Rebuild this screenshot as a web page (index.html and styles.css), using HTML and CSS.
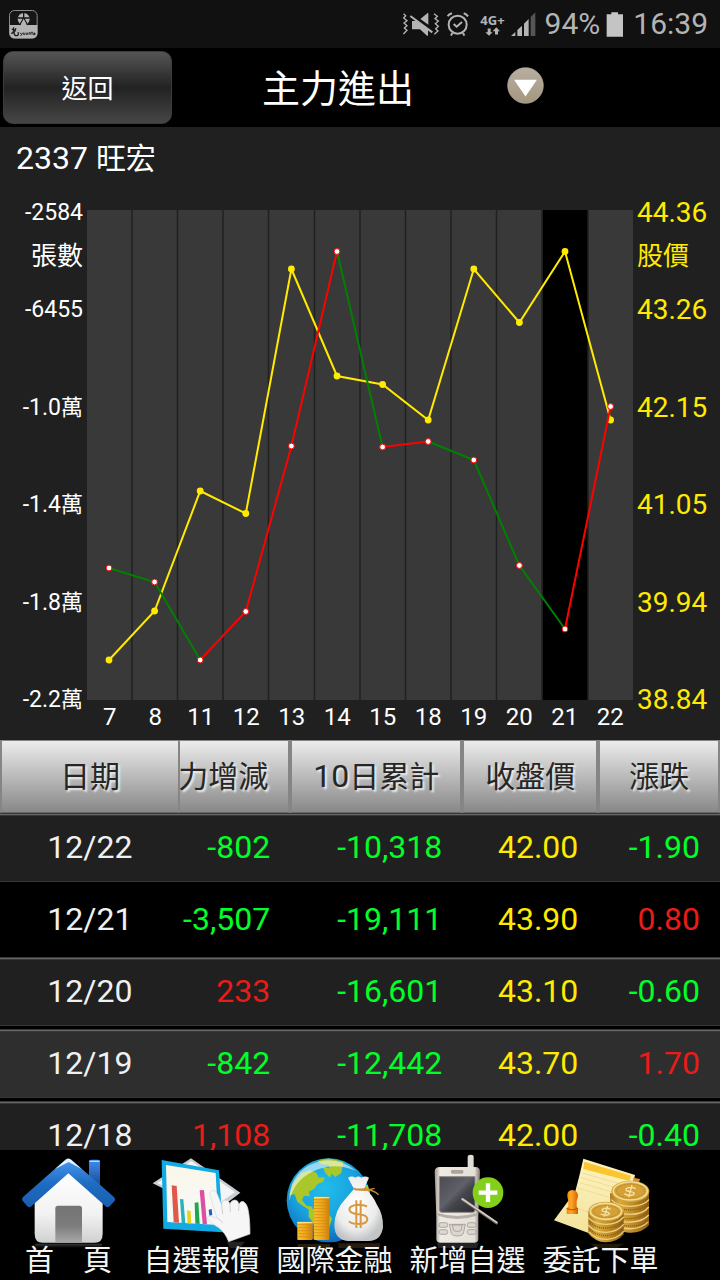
FILE: index.html
```html
<!DOCTYPE html>
<html lang="zh-Hant">
<head>
<meta charset="utf-8">
<meta name="viewport" content="width=device-width, initial-scale=1">
<title>主力進出</title>
<link rel="stylesheet" href="styles.css">
</head>
<body>
<div class="screen">
  <div class="status">
    <svg class="status-app" viewBox="27 27 87 87" aria-hidden="true">
      <rect x="28.500" y="28.500" width="83" height="83" rx="15" fill="#161616" stroke="#8c8c8c" stroke-width="3"/>
      <path d="M29 72H112V97Q112 112 97 112H44Q29 112 29 97Z" fill="#b4b4b4"/>
      <circle cx="71" cy="54" r="18" fill="#b4b4b4"/>
      <path d="M71 35V51M53 51H89M71 51L59 72M71 51L83 72" stroke="#161616" stroke-width="4" fill="none"/>
      <path d="M62 72L71 54L80 72Z" fill="#b4b4b4"/>
      <path d="M35 84L48 90M41 79L40 94L34 98M48 82L42 92Q42 104 50 104Q57 103 54 94" stroke="#1a1a1a" stroke-width="4" fill="none"/>
      <path d="M60 95L64 100M68 95L62 105M70 95V100H75V95M79 96H83V100H78V98M87 101V95H91V101M96 92V101M94 95H98M101 96H105V101H100V98H105" stroke="#1a1a1a" stroke-width="2.500" fill="none"/>
    </svg>
    <svg class="status-mute" viewBox="120 30 120 81" aria-hidden="true">
      <g fill="none" stroke="#b4b4b4" stroke-width="4">
        <path d="M128 38L134 44L128 51L138 59L129 66L138 74L130 81L138 88L127 99"/>
        <path d="M219 38L229 46L222 53L232 60L223 68L232 76L224 83L231 90L220 100"/>
      </g>
      <path d="M153 60H168L201 83V104H198L177 85H153ZM178 54L200 36H202V71Z" fill="#b4b4b4"/>
      <path d="M148 45L214 94" stroke="#b4b4b4" stroke-width="6"/>
    </svg>
    <svg class="status-alarm" viewBox="255 30 72 81" aria-hidden="true">
      <g fill="none" stroke="#b4b4b4">
        <circle cx="290" cy="71" r="27" stroke-width="6"/>
        <path d="M278 69L287 77L303 63" stroke-width="6"/>
        <path d="M260 46Q264 39 273 37M308 37Q316 39 321 46M274 96L270 104M306 96L310 104" stroke-width="6"/>
      </g>
    </svg>
    <div class="status-net">
      <span>4G+</span>
      <svg viewBox="374 80 45 26" aria-hidden="true"><path d="M382 84H391V95H397L386 106L375 95H382ZM404 102H413V92H419L408 80L397 92H404Z" fill="#b4b4b4"/></svg>
    </div>
    <svg class="status-signal" viewBox="450 30 78 81" aria-hidden="true">
      <path d="M453 105L466 93V105ZM472 87L486 74V105H472ZM492 68L506 54V105H492Z" fill="#b4b4b4"/>
      <path d="M512 48L526 34V105H512Z" fill="#555"/>
    </svg>
    <span class="status-text">94%</span>
    <svg class="status-battery" viewBox="738 30 54 81" aria-hidden="true"><path d="M740 40H754V34H774V40H789V107H740Z" fill="#c4c4c4"/></svg>
    <time class="status-text">16:39</time>
  </div>

  <header class="topbar">
    <button class="back" type="button">返回</button>
    <h1 class="title">主力進出</h1>
    <button class="picker" type="button" aria-label="選擇功能">
      <svg viewBox="0 0 110 110" aria-hidden="true">
        <defs><linearGradient id="sand" x1="0" y1="0" x2="0" y2="1"><stop offset="0" stop-color="#b8aea0"/><stop offset="1" stop-color="#a4977f"/></linearGradient></defs>
        <circle cx="55" cy="55" r="53" fill="url(#sand)" stroke="#b9af9f" stroke-width="2"/>
        <path d="M21 38H89L55 88Z" fill="#fff"/>
      </svg>
    </button>
  </header>

  <main class="main">
    <h2 class="stock">2337 <span class="cjk">旺宏</span></h2>

    <section class="chart">
      <div class="axis axis-left">
        <span>-2584</span><span class="unit">張數</span><span>-6455</span>
        <span>-1.0<span class="wan">萬</span></span><span>-1.4<span class="wan">萬</span></span><span>-1.8<span class="wan">萬</span></span><span>-2.2<span class="wan">萬</span></span>
      </div>
      <div class="plot">
        <svg class="plot-area" viewBox="87 210 546 490" role="img" aria-label="主力張數與股價走勢">
          <rect x="87" y="210" width="546" height="490" fill="#393939"/>
          <rect x="542.500" y="210" width="45.500" height="490" fill="#000"/>
          <path d="M132 210V700M177.500 210V700M223 210V700M268.500 210V700M314.500 210V700M360 210V700M405.500 210V700M451 210V700M496.500 210V700M542 210V700M588 210V700" stroke="#202020" stroke-width="1.500"/>
          <g fill="none" stroke-width="2">
            <path stroke="#ffea00" d="M109 660L154.600 611L200.200 491L245.800 513.500L291.400 269L337 376L382.600 384.500L428.200 420L473.800 269L519.400 322.500L565 251.500L610.600 420"/>
          </g>
          <g fill="#ffea00">
            <circle cx="109" cy="660" r="3.400"/><circle cx="154.600" cy="611" r="3.400"/><circle cx="200.200" cy="491" r="3.400"/><circle cx="245.800" cy="513.500" r="3.400"/><circle cx="291.400" cy="269" r="3.400"/><circle cx="337" cy="376" r="3.400"/><circle cx="382.600" cy="384.500" r="3.400"/><circle cx="428.200" cy="420" r="3.400"/><circle cx="473.800" cy="269" r="3.400"/><circle cx="519.400" cy="322.500" r="3.400"/><circle cx="565" cy="251.500" r="3.400"/><circle cx="610.600" cy="420" r="3.400"/>
          </g>
          <g fill="none" stroke-width="2">
            <path stroke="#008000" d="M109 568L154.600 582L200.200 660M337 251.500L382.600 447M428.200 441.500L473.800 460L519.400 565.500L565 629"/>
            <path stroke="#f00" d="M200.200 660L245.800 611.500L291.400 446L337 251.500M382.600 447L428.200 441.500M565 629L610.600 406.500"/>
          </g>
          <g fill="#fff" stroke="#f00" stroke-width="1">
            <circle cx="109" cy="568" r="2.900"/><circle cx="154.600" cy="582" r="2.900"/><circle cx="200.200" cy="660" r="2.900"/><circle cx="245.800" cy="611.500" r="2.900"/><circle cx="291.400" cy="446" r="2.900"/><circle cx="337" cy="251.500" r="2.900"/><circle cx="382.600" cy="447" r="2.900"/><circle cx="428.200" cy="441.500" r="2.900"/><circle cx="473.800" cy="460" r="2.900"/><circle cx="519.400" cy="565.500" r="2.900"/><circle cx="565" cy="629" r="2.900"/><circle cx="610.600" cy="406.500" r="2.900"/>
          </g>
        </svg>
        <div class="days">
          <span>7</span><span>8</span><span>11</span><span>12</span><span>13</span><span>14</span><span>15</span><span>18</span><span>19</span><span>20</span><span>21</span><span>22</span>
        </div>
      </div>
      <div class="axis axis-right">
        <span>44.36</span><span class="unit">股價</span><span>43.26</span><span>42.15</span><span>41.05</span><span>39.94</span><span>38.84</span>
      </div>
    </section>

    <div class="table-wrap">
      <table class="quotes">
        <thead>
          <tr>
            <th class="c-date" scope="col">日期</th>
            <th class="c-change" scope="col">力增減</th>
            <th class="c-sum" scope="col"><span class="num">10</span>日累計</th>
            <th class="c-close" scope="col">收盤價</th>
            <th class="c-diff" scope="col">漲跌</th>
          </tr>
        </thead>
        <tbody>
          <tr><td class="date">12/22</td><td class="down">-802</td><td class="down">-10,318</td><td class="price">42.00</td><td class="down">-1.90</td></tr>
          <tr class="selected"><td class="date">12/21</td><td class="down">-3,507</td><td class="down">-19,111</td><td class="price">43.90</td><td class="up">0.80</td></tr>
          <tr><td class="date">12/20</td><td class="up">233</td><td class="down">-16,601</td><td class="price">43.10</td><td class="down">-0.60</td></tr>
          <tr class="alt"><td class="date">12/19</td><td class="down">-842</td><td class="down">-12,442</td><td class="price">43.70</td><td class="up">1.70</td></tr>
          <tr><td class="date">12/18</td><td class="up">1,108</td><td class="down">-11,708</td><td class="price">42.00</td><td class="down">-0.40</td></tr>
        </tbody>
      </table>
    </div>
  </main>

  <nav class="tabs">
    <a class="tab" href="#home">
      <svg viewBox="6 15 399 294" aria-hidden="true">
        <defs>
          <linearGradient id="roof" x1="0" y1="0" x2="0" y2="1"><stop offset="0" stop-color="#4c9af0"/><stop offset=".5" stop-color="#1e6cc4"/><stop offset="1" stop-color="#1a5eac"/></linearGradient>
          <linearGradient id="wall" x1="0" y1="0" x2="0" y2="1"><stop offset="0" stop-color="#fff"/><stop offset=".6" stop-color="#f2f2f2"/><stop offset="1" stop-color="#cfd1d0"/></linearGradient>
          <linearGradient id="door" x1="0" y1="0" x2="0" y2="1"><stop offset="0" stop-color="#747474"/><stop offset=".55" stop-color="#7c7c7c"/><stop offset="1" stop-color="#a8a8a8"/></linearGradient>
          <linearGradient id="chimney" x1="0" y1="0" x2="0" y2="1"><stop offset="0" stop-color="#3f8ef0"/><stop offset="1" stop-color="#123e86"/></linearGradient>
          <linearGradient id="mirror" x1="0" y1="0" x2="0" y2="1"><stop offset="0" stop-color="#3a3a3a"/><stop offset="1" stop-color="#000"/></linearGradient>
        </defs>
        <path d="M106 296H306V309H106Z" fill="url(#mirror)"/>
        <path d="M267 50Q267 44 274 44H293Q300 44 300 50V135L267 108Z" fill="url(#chimney)"/>
        <path d="M268 49H299" stroke="#b9d6fb" stroke-width="4"/>
        <path d="M104 168L205 78L308 168V266Q308 293 284 293H128Q104 293 104 266Z" fill="url(#wall)"/>
        <path d="M166 292V190Q166 182 174 182H238Q246 182 246 190V292Z" fill="url(#door)"/>
        <path d="M196 44Q205 37 214 44L341 155Q348 162 343 169L329 184Q323 190 316 183L205 85L95 183Q88 190 82 184L69 169Q63 162 70 155Z" fill="url(#roof)"/>
        <path d="M165 72L197 44Q205 38 213 44L245 72L206 51Z" fill="#eaf4ff"/>
      </svg>
      <span>首　頁</span>
    </a>
    <a class="tab" href="#watchlist">
      <svg viewBox="405 15 399 294" aria-hidden="true">
        <defs><linearGradient id="paper" x1="0" y1="0" x2="0" y2="1"><stop offset="0" stop-color="#fbf6ea"/><stop offset="1" stop-color="#f4faf8"/></linearGradient></defs>
        <path d="M458 115L573 40L721 143L640 205Z" fill="#c9ccd2"/>
        <path d="M471 114L574 48L705 142L635 190Z" fill="#f3f4f6"/>
        <path d="M680 290H735L720 309H690Z" fill="#222"/>
        <path d="M485 45L657 76L669 262L490 251Z" fill="#12aae2"/>
        <path d="M498 60L647 84L655 240L502 231Z" fill="url(#paper)"/>
        <path d="M515 121L530 123L537 233L521 232Z" fill="#e2574c"/>
        <path d="M540 162L550 163L556 235L545 234Z" fill="#25b3bd"/>
        <path d="M561 196L572 198L574 235L562 235Z" fill="#e8d21a"/>
        <path d="M584 173L595 172L599 237L586 236Z" fill="#1fa54c"/>
        <path d="M599 136L612 135L621 238L608 237Z" fill="#dc4fa0"/>
        <path d="M626 194L635 192L637 210L628 212Z" fill="#245cc0"/>
        <path d="M630 144Q634 132 645 138Q652 144 655 155L665 180Q666 166 675 166Q686 164 690 178Q692 166 704 165Q714 165 717 178Q722 166 731 170Q741 177 744 192Q750 220 750 267L686 290Q675 262 656 248Q628 232 622 220Q625 209 640 216L651 219Q641 190 634 163Q630 151 630 144Z" fill="#f6f6f6" stroke="#d4d4d4" stroke-width="2"/>
        <path d="M665 180L668 207M690 178L691 202M717 178L716 198M652 219Q665 226 668 235" fill="none" stroke="#bdbdbd" stroke-width="2"/>
      </svg>
      <span>自選報價</span>
    </a>
    <a class="tab" href="#global">
      <svg viewBox="24 15 399 294" aria-hidden="true">
        <defs>
          <radialGradient id="sea" cx=".45" cy=".35" r=".65"><stop offset="0" stop-color="#22bdea"/><stop offset=".6" stop-color="#18a0dc"/><stop offset="1" stop-color="#0e6dbd"/></radialGradient>
          <linearGradient id="gold" x1="0" y1="0" x2="1" y2="0"><stop offset="0" stop-color="#f8c133"/><stop offset=".5" stop-color="#f0a91b"/><stop offset="1" stop-color="#cf7f0b"/></linearGradient>
          <radialGradient id="bag" cx=".45" cy=".4" r=".6"><stop offset="0" stop-color="#fff"/><stop offset=".7" stop-color="#ececec"/><stop offset="1" stop-color="#c2c4c6"/></radialGradient>
          <clipPath id="globe"><circle cx="206" cy="166" r="126"/></clipPath>
        </defs>
        <path d="M112 297H210V309H112ZM235 295H360V309H235Z" fill="#261c10"/>
        <circle cx="206" cy="166" r="126" fill="url(#sea)"/>
        <g clip-path="url(#globe)" fill="#a9c72a">
          <path d="M88 150L98 118L124 84L150 76L170 84L176 98L194 97L190 110L174 116L162 132L146 140L150 154L132 152L126 166L140 182L158 185L154 198L130 184L112 170L104 148Z"/>
          <path d="M188 66L208 70L216 84L210 98L196 84Z"/>
          <path d="M172 48L205 40L250 50L244 84L226 96L210 82L206 60L184 58Z"/>
          <path d="M146 190L170 192L200 202L216 220L206 252L190 278L168 262L160 235L146 215Z"/>
          <path d="M304 120L336 120V185L310 160Z"/>
        </g>
        <path d="M88 168Q88 94 147 61Q222 23 289 78Q222 48 157 80Q102 107 88 168Z" fill="#fff" opacity=".55"/>
        <rect x="162" y="155" width="46" height="130" rx="3" fill="url(#gold)"/>
        <rect x="112" y="230" width="46" height="55" rx="3" fill="url(#gold)"/>
        <path d="M162 164H208M162 173H208M162 182H208M162 191H208M162 200H208M162 209H208M162 218H208M162 227H208M162 236H208M162 245H208M162 254H208M162 263H208M162 272H208M112 239H158M112 248H158M112 257H158M112 266H158M112 275H158" stroke="#cf8a12" stroke-width="2"/>
        <path d="M162 158H208M112 233H158" stroke="#ffe07c" stroke-width="4"/>
        <path d="M264 98Q276 91 286 98Q295 91 304 98Q316 91 327 98L313 130Q338 150 350 178Q371 210 369 247Q363 288 326 288H264Q223 284 223 240Q224 196 256 162Q268 148 282 132Z" fill="url(#bag)"/>
        <path d="M280 129Q295 136 318 130M283 134L315 136L344 130M312 132Q339 134 356 149" fill="none" stroke="#c98a34" stroke-width="4"/>
        <path d="M321 185Q313 179 296 179Q268 180 268 194Q270 206 296 208Q322 210 322 223Q320 237 296 237Q275 237 267 229M289 166V249M302 166V249" fill="none" stroke="#d9983f" stroke-width="6"/>
      </svg>
      <span>國際金融</span>
    </a>
    <a class="tab" href="#add">
      <svg viewBox="423 15 399 294" aria-hidden="true">
        <defs>
          <linearGradient id="shell" x1="0" y1="0" x2="1" y2="0"><stop offset="0" stop-color="#a0948f"/><stop offset=".12" stop-color="#eeebe4"/><stop offset=".88" stop-color="#e4e0d8"/><stop offset="1" stop-color="#7f7775"/></linearGradient>
          <linearGradient id="lcd" x1="0" y1="0" x2="1" y2="1"><stop offset="0" stop-color="#4b4c52"/><stop offset=".45" stop-color="#5f6068"/><stop offset=".6" stop-color="#44454b"/><stop offset="1" stop-color="#2a2b30"/></linearGradient>
        </defs>
        <path d="M530 294H656L650 309H536Z" fill="#252321"/>
        <path d="M623 75V36Q623 29 632 29Q641 29 641 36V75Z" fill="#e0ddd6"/>
        <path d="M524 80Q524 66 540 66H646Q660 66 660 80L655 215V282Q655 293 643 293H541Q529 293 529 282V215Z" fill="url(#shell)"/>
        <rect x="573" y="75" width="37" height="11" rx="4" fill="#aaa39e"/>
        <path d="M538 95H645V194Q645 202 637 202H546Q538 202 538 194Z" fill="url(#lcd)" stroke="#8d8784" stroke-width="3"/>
        <path d="M534 204Q592 222 650 204V212Q592 232 534 212Z" fill="#b8aea9"/>
        <g fill="#dcd6cf" stroke="#a39a95" stroke-width="2.500">
          <path d="M568 238H616L610 266Q606 273 592 273Q578 273 574 266Z"/>
          <path d="M577 240H607L603 257Q592 262 581 257Z"/>
          <rect x="537" y="233" width="26" height="14" rx="6"/><rect x="622" y="233" width="26" height="14" rx="6"/>
          <rect x="537" y="254" width="26" height="14" rx="6"/><rect x="622" y="254" width="26" height="14" rx="6"/>
        </g>
        <path d="M607 163L710 234" stroke="#6e6862" stroke-width="9" stroke-linecap="round"/>
        <path d="M607 162L710 232" stroke="#d5d0c6" stroke-width="5" stroke-linecap="round"/>
        <circle cx="684" cy="143" r="46" fill="#84cf1c"/>
        <path d="M684 115V171M656 143H712" stroke="#fff" stroke-width="13"/>
      </svg>
      <span>新增自選</span>
    </a>
    <a class="tab" href="#order">
      <svg viewBox="102 15 399 294" aria-hidden="true">
        <defs>
          <linearGradient id="sheet" x1="0" y1="0" x2="0" y2="1"><stop offset="0" stop-color="#fdf3c0"/><stop offset="1" stop-color="#f2e29a"/></linearGradient>
          <linearGradient id="coin" x1="0" y1="0" x2="1" y2="0"><stop offset="0" stop-color="#a8741a"/><stop offset=".25" stop-color="#d9ab3e"/><stop offset=".6" stop-color="#c08b24"/><stop offset="1" stop-color="#8c5e12"/></linearGradient>
          <linearGradient id="stamp" x1="0" y1="0" x2="1" y2="0"><stop offset="0" stop-color="#f58a0c"/><stop offset=".4" stop-color="#ffa726"/><stop offset="1" stop-color="#d95f02"/></linearGradient>
        </defs>
        <path d="M270 296H372L352 309H290Z" fill="#21190a"/>
        <path d="M250 41L405 90L392 150L308 280L162 226L226 139Q239 91 250 41Z" fill="url(#sheet)"/>
        <path d="M253 50L393 92L388 108L250 72Z" fill="#fbc530"/>
        <path d="M246 84L370 119M243 98L340 126M239 113L335 141M233 129L328 157M233 190L277 206" stroke="#ecd28c" stroke-width="2"/>
        <path d="M400 98L420 102L415 120L399 114Z" fill="#d88b3a"/>
        <path d="M202 150Q202 136 217 135Q232 136 234 150Q234 160 230 167V185L234 190V207H200V190L205 185V167Q202 160 202 150Z" fill="url(#stamp)"/>
        <path d="M200 191Q217 198 234 191" fill="none" stroke="#b94d00" stroke-width="3"/>
        <path d="M330 145H447V240Q428 264 388 263Q353 260 333 239Z" fill="url(#coin)"/>
        <path d="M334 164Q352 184 390 184Q430 184 447 164M334 188Q352 208 390 208Q430 208 446 186M350 226Q370 233 395 231Q430 229 446 210M365 249Q420 258 445 230" fill="none" stroke="#ecd282" stroke-width="4"/>
        <path d="M336 174Q356 195 392 195Q431 193 446 176M350 218Q412 229 446 200M365 241Q430 249 446 222" fill="none" stroke="#86591a" stroke-width="4" stroke-dasharray="3 3"/>
        <ellipse cx="391" cy="139" rx="57" ry="32" fill="#d2a23a"/>
        <ellipse cx="391" cy="138" rx="51" ry="27" fill="none" stroke="#f3dc94" stroke-width="5"/>
        <ellipse cx="391" cy="138" rx="42" ry="21" fill="#d5a035" stroke="#b9842a" stroke-width="3" stroke-dasharray="4 3"/>
        <path d="M407 131Q392 123 379 131Q374 138 392 140Q408 143 400 149Q386 155 373 146M396 120L386 157" fill="none" stroke="#f6e3a4" stroke-width="4"/>
        <path d="M265 200H371V268Q352 292 317 292Q286 290 265 266Z" fill="url(#coin)"/>
        <path d="M265 218Q282 238 318 238Q353 238 371 216M265 240Q282 262 318 262Q353 260 371 238M267 261Q286 283 318 283Q352 282 371 259" fill="none" stroke="#ecd282" stroke-width="4"/>
        <path d="M267 228Q286 250 318 249Q352 248 370 228M267 250Q286 272 318 272Q352 270 370 248" fill="none" stroke="#86591a" stroke-width="4" stroke-dasharray="3 3"/>
        <ellipse cx="318" cy="199" rx="53" ry="29" fill="#d2a23a"/>
        <ellipse cx="318" cy="199" rx="47" ry="24" fill="none" stroke="#f3dc94" stroke-width="5"/>
        <ellipse cx="318" cy="199" rx="38" ry="18" fill="#d5a035" stroke="#b9842a" stroke-width="3" stroke-dasharray="4 3"/>
        <path d="M332 193Q318 186 307 193Q303 199 319 201Q333 204 326 209Q314 213 302 207M323 183L313 215" fill="none" stroke="#f6e3a4" stroke-width="4"/>
      </svg>
      <span>委託下單</span>
    </a>
  </nav>
</div>
</body>
</html>
```
FILE: styles.css
```css
* {
  box-sizing: border-box;
}

body {
  margin: 0;
  background: #000;
  color: #fff;
  font-family: Roboto, "Noto Sans CJK TC", sans-serif;
}

button {
  padding: 0;
  border: 0;
  color: inherit;
  font-family: inherit;
  cursor: pointer;
}

svg {
  display: block;
}

.screen {
  display: flex;
  flex-direction: column;
  height: 100vh;
}

/* Status bar */
.status {
  display: flex;
  flex: none;
  align-items: center;
  height: 48px;
  padding: 0 12px 0 9px;
  background: #111;
  color: #b4b4b4;
}

.status-app {
  width: 29px;
  height: 29px;
  margin-right: auto;
}

.status-mute {
  width: 40px;
  height: 27px;
  margin-right: 5px;
}

.status-alarm {
  width: 24px;
  height: 27px;
  margin-right: 10px;
}

.status-net {
  display: flex;
  flex-direction: column;
  align-items: center;
  margin-right: 5px;
  font: 700 13px/14px "Open Sans", sans-serif;
}

.status-net svg {
  width: 15px;
  height: 9px;
}

.status-signal {
  width: 26px;
  height: 27px;
  margin-right: 9px;
}

.status-battery {
  width: 18px;
  height: 27px;
  margin: 0 9px 0 6px;
}

.status-text {
  font-size: 30px;
  line-height: 48px;
}

/* Title bar */
.topbar {
  display: flex;
  flex: none;
  align-items: center;
  height: 79px;
  padding-left: 3px;
  background: #000;
}

.back {
  width: 169px;
  height: 73px;
  padding-bottom: 2px;
  border: 1px solid #3c3c3c;
  border-radius: 10px;
  background: linear-gradient(#555, #222 50%, #464646);
  font-size: 26px;
}

.title {
  margin: 0 0 0 90px;
  padding-bottom: 4px;
  font-size: 38px;
  font-weight: 400;
}

.picker {
  width: 37px;
  height: 37px;
  margin: 0 0 4px 93px;
  border-radius: 50%;
  background: none;
}

/* Chart */
.main {
  display: flex;
  flex: 1;
  flex-direction: column;
  min-height: 0;
  background: #202020;
}

.stock {
  margin: 0;
  padding: 12px 16px;
  font-size: 32px;
  font-weight: 400;
  line-height: 38px;
}

.cjk {
  font-size: 30px;
}

.chart {
  display: grid;
  flex: none;
  grid-template-columns: 87px 1fr 87px;
  padding: 9px 0 8px;
}

.axis {
  display: grid;
  grid-template-rows: 43fr 54fr 97fr 97fr 97fr 97fr 28px;
  margin-bottom: 18px;
  line-height: 28px;
}

.axis-left {
  padding-right: 4px;
  font-size: 23px;
  text-align: right;
}

.axis-right {
  padding-left: 4px;
  color: #ffea00;
  font-size: 28px;
}

.unit {
  font-size: 26px;
}

.wan {
  font-size: 22px;
  line-height: 24px;
}

.plot {
  padding-top: 11px;
}

.plot-area {
  width: 100%;
}

.days {
  display: grid;
  grid-template-columns: repeat(12, 1fr);
  padding-top: 3px;
  font-size: 24px;
  line-height: 29px;
  text-align: center;
}

/* Quote table */
.table-wrap {
  flex: 1;
  min-height: 0;
  overflow: hidden;
}

.quotes {
  width: 100%;
  border-spacing: 0;
  table-layout: fixed;
}

.quotes th {
  height: 73px;
  padding: 0;
  overflow: hidden;
  border: solid #858585;
  border-width: 1px 2px;
  border-bottom-color: #666;
  background: linear-gradient(#ececec, #888);
  color: #262626;
  font-size: 30px;
  font-weight: 400;
  line-height: 70px;
  text-shadow: 2px 2px 2px #eee;
  white-space: nowrap;
}

.num {
  font-size: 32px;
}

.quotes .c-date {
  width: 24.7%;
  border-right: 0;
}

.quotes .c-change {
  width: 15.6%;
  padding-right: 20px;
  direction: rtl;
  text-align: right;
}

.c-sum {
  width: 23.9%;
}

.c-close {
  width: 18.9%;
}

.quotes td {
  height: 72px;
  padding: 0 20px 4px 0;
  background: linear-gradient(#383838 1px, #666 1px, #666 2px, #383838 2px, #383838 3px, #202020 3px, #202020 68px, #383838 68px, #383838 69px, #000 69px);
  font-size: 32px;
  text-align: right;
}

.quotes .alt td {
  background: linear-gradient(#383838 1px, #666 1px, #666 2px, #383838 2px, #383838 3px, #2e2e2e 3px, #2e2e2e 68px, #383838 68px, #383838 69px, #000 69px);
}

.quotes .selected td {
  background: #000;
}

.quotes .date {
  padding-right: 0;
  padding-left: 2px;
  color: #f0f0f0;
  text-align: center;
}

.quotes .down {
  color: #00ff2a;
}

.quotes .up {
  color: #e81c18;
}

.quotes .price {
  color: #ffea00;
}

/* Bottom menu */
.tabs {
  display: flex;
  flex: none;
  height: 130px;
  padding-left: 2px;
  overflow: hidden;
  background: #000;
}

.tab {
  flex: 0 0 133px;
  color: #f4f4f4;
  font-size: 29px;
  line-height: 26px;
  text-align: center;
  text-decoration: none;
  white-space: nowrap;
}

.tab svg {
  width: 133px;
  height: 98px;
}
```
